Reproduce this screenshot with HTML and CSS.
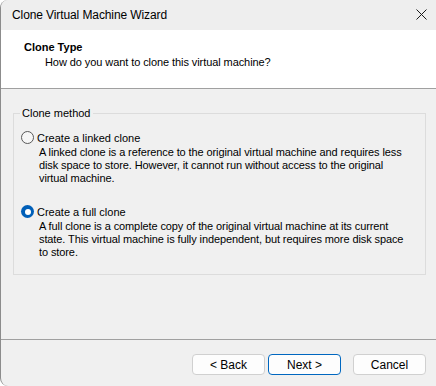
FILE: index.html
```html
<!DOCTYPE html>
<html>
<head>
<meta charset="utf-8">
<link rel="stylesheet" href="styles.css">
</head>
<body>
<div class="window">
  <div class="titlebar">
    <span class="title">Clone Virtual Machine Wizard</span>
    <svg class="close" width="11" height="11" viewBox="0 0 11 11"><path d="M0.5 0.5L10.5 10.5M10.5 0.5L0.5 10.5" stroke="#1a1a1a" stroke-width="1"/></svg>
  </div>
  <div class="header">
    <div class="h-title">Clone Type</div>
    <div class="h-sub">How do you want to clone this virtual machine?</div>
  </div>
  <div class="content">
    <fieldset class="group">
      <legend class="legend">Clone method</legend>
      <div class="option first">
        <div class="radio-row"><span class="radio"></span><span class="radio-label">Create a linked clone</span></div>
        <div class="desc">A linked clone is a reference to the original virtual machine and requires less disk space to store. However, it cannot run without access to the original virtual machine.</div>
      </div>
      <div class="option second">
        <div class="radio-row"><span class="radio checked"></span><span class="radio-label">Create a full clone</span></div>
        <div class="desc">A full clone is a complete copy of the original virtual machine at its current state. This virtual machine is fully independent, but requires more disk space to store.</div>
      </div>
    </fieldset>
  </div>
  <div class="footer">
    <button class="btn">&lt; Back</button>
    <button class="btn primary">Next &gt;</button>
    <button class="btn cancel">Cancel</button>
  </div>
</div>
</body>
</html>
```

FILE: styles.css
```css
html, body {
  margin: 0;
  padding: 0;
  background: #ffffff;
}
body {
  width: 436px;
  height: 386px;
  overflow: hidden;
  font-family: "Liberation Sans", Arial, sans-serif;
  font-size: 11px;
  color: #000;
}
.window {
  width: 436px;
  height: 386px;
  box-sizing: border-box;
  border-left: 1px solid #8c8c8c;
  border-radius: 8px 0 0 8px;
  background: #f0f0f0;
  overflow: hidden;
  display: flex;
  flex-direction: column;
}
.titlebar {
  height: 30px;
  flex: none;
  background: #eeeeee;
  display: flex;
  align-items: center;
  justify-content: space-between;
  padding: 0 9px 0 11px;
}
.title {
  font-family: "Liberation Sans", Arial, sans-serif;
  font-size: 12px;
  letter-spacing: -0.1px;
  color: #000;
  margin-top: -1px;
}
.close {
  display: block;
  margin-top: -2px;
}
.header {
  height: 48px;
  flex: none;
  background: #fff;
  border-bottom: 1px solid #a0a0a0;
  padding: 10px 0 0 23px;
  box-sizing: content-box;
}
.h-title {
  font-weight: bold;
  line-height: 14px;
  height: 14px;
}
.h-sub {
  line-height: 14px;
  padding-left: 21px;
  margin-top: 1px;
  letter-spacing: -0.08px;
}
.content {
  height: 250px;
  flex: none;
  padding: 18px 10px 0 12px;
  box-sizing: border-box;
}
.group {
  margin: 0;
  padding: 0 0 14px 0;
  border: 1px solid #dcdcdc;
  height: 168px;
  box-sizing: border-box;
  min-width: 0;
}
.legend {
  padding: 0 2px;
  margin-left: 6px;
  line-height: 13px;
}
.option.first {
  margin-top: 10px;
}
.option.second {
  margin-top: 19px;
}
.radio-row {
  display: flex;
  align-items: center;
  height: 15px;
  padding-left: 7px;
}
.radio {
  width: 13px;
  height: 13px;
  box-sizing: border-box;
  border-radius: 50%;
  border: 1px solid #595959;
  background: #f6f6f6;
  flex: none;
  position: relative;
}
.radio.checked {
  border: none;
  background: #005fb8;
}
.radio.checked::after {
  content: "";
  position: absolute;
  left: 3.5px;
  top: 3.5px;
  width: 6px;
  height: 6px;
  border-radius: 50%;
  background: #fff;
}
.radio-label {
  margin-left: 3px;
}
.desc {
  padding-left: 25px;
  padding-right: 20px;
  line-height: 13px;
  margin-top: 1px;
  letter-spacing: -0.1px;
}
.footer {
  flex: 1;
  border-top: 1px solid #a0a0a0;
  display: flex;
  justify-content: flex-end;
  align-items: flex-start;
  padding: 14px 10px 0 0;
}
.btn {
  width: 73px;
  height: 21px;
  box-sizing: border-box;
  border: 1px solid #d0d0d0;
  border-radius: 4px;
  background: #fdfdfd;
  font-family: "Liberation Sans", Arial, sans-serif;
  font-size: 12px;
  color: #000;
  padding: 0;
  margin: 0 0 0 3px;
}
.btn.primary {
  border-color: #0067c0;
}
.btn.cancel {
  margin-left: 12px;
}
```
